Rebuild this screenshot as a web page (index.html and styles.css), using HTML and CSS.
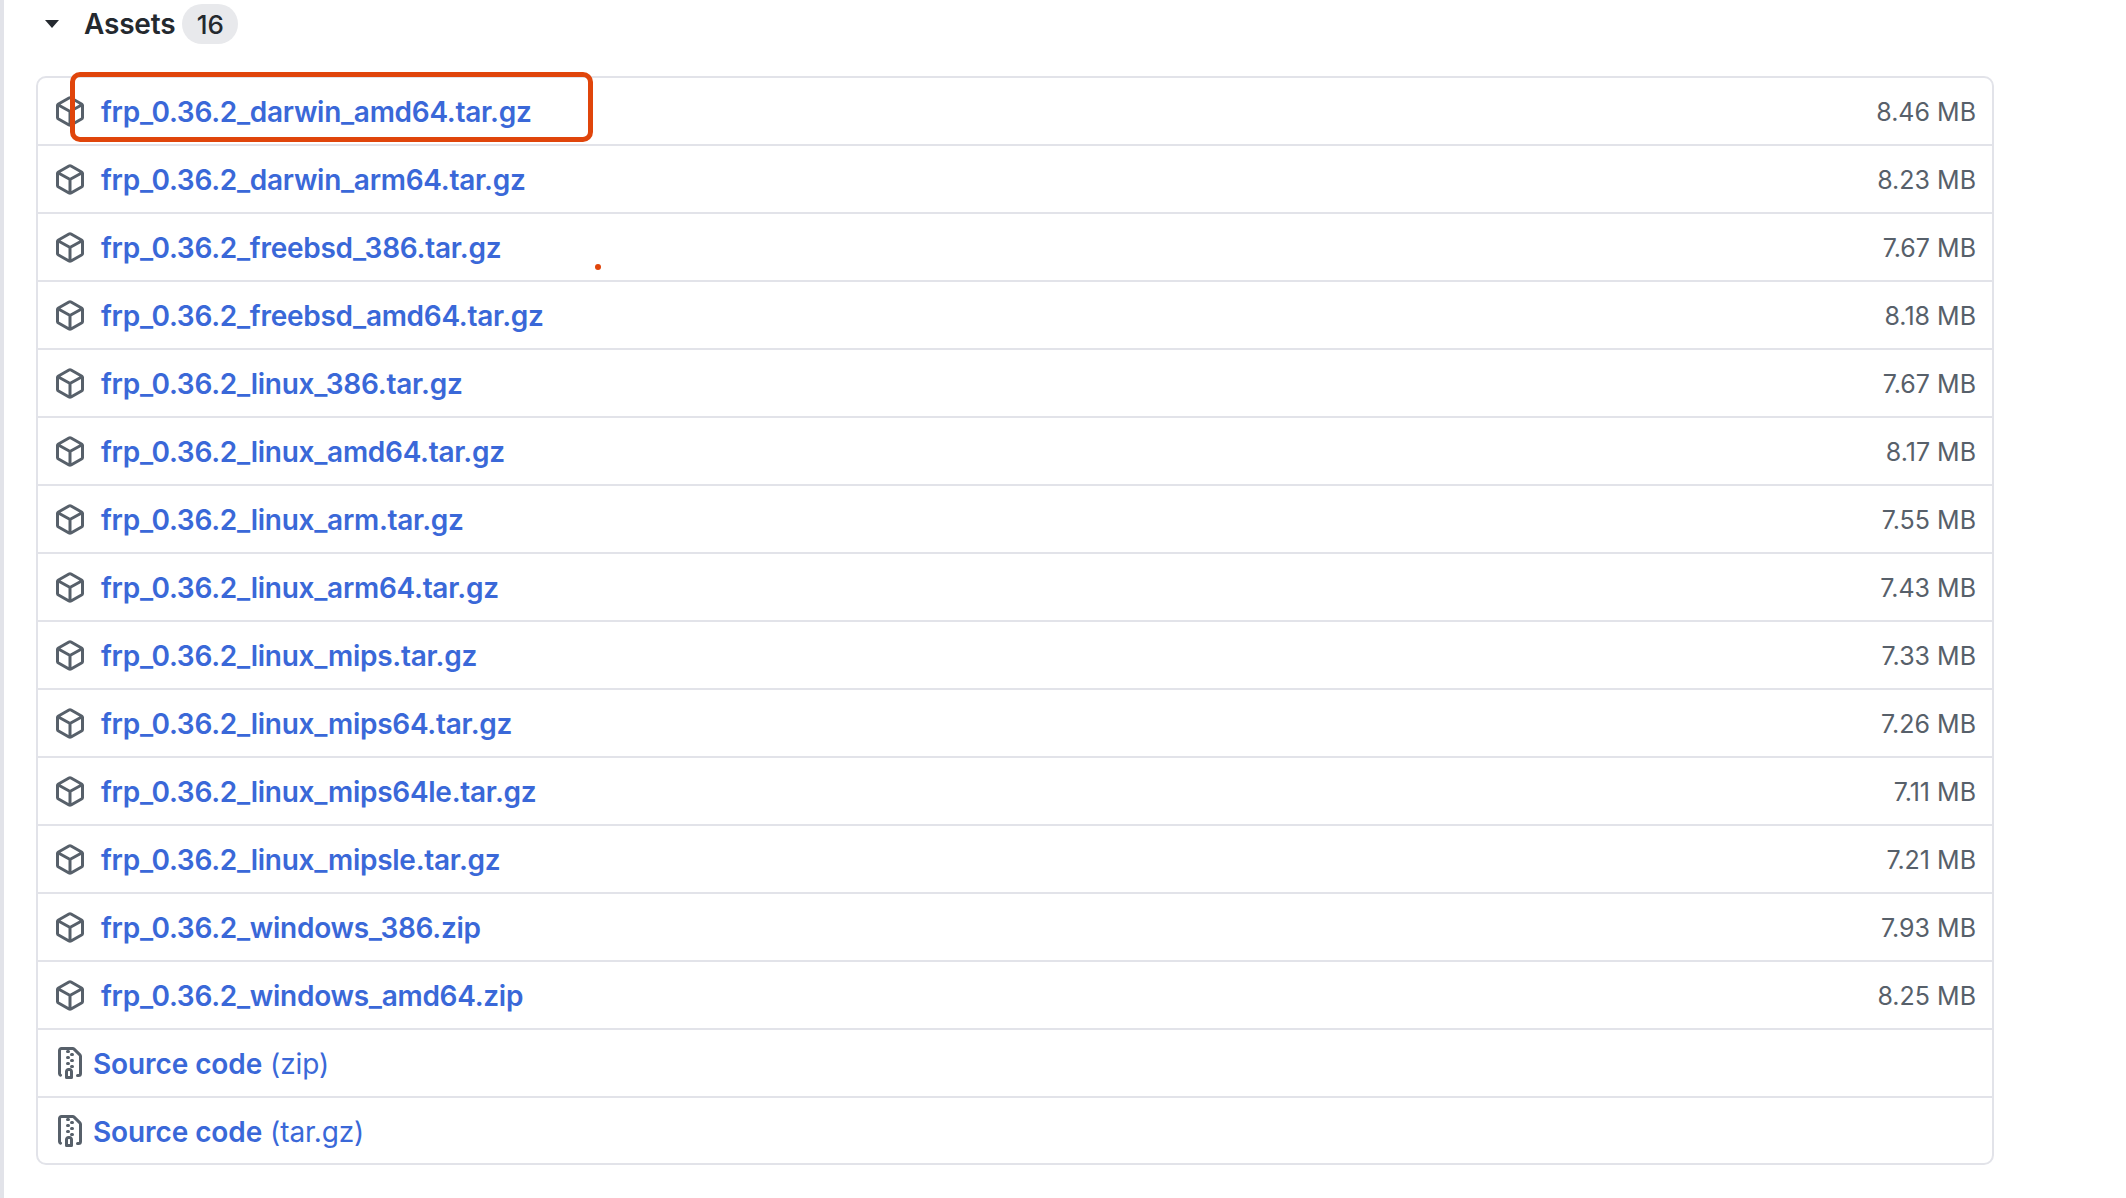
FILE: index.html
```html
<!DOCTYPE html>
<html lang="en">
<head>
<meta charset="utf-8">
<title>Assets</title>
<link rel="stylesheet" href="styles.css">
</head>
<body>
<svg class="defs" aria-hidden="true">
  <symbol id="pkg" viewBox="1 0 14 16" preserveAspectRatio="none"><path fill-rule="evenodd" d="m8.878.392 5.25 3.045c.54.314.872.89.872 1.514v6.098a1.75 1.75 0 0 1-.872 1.514l-5.25 3.045a1.75 1.75 0 0 1-1.756 0l-5.25-3.045A1.75 1.75 0 0 1 1 11.049V4.951c0-.624.332-1.201.872-1.514L7.122.392a1.75 1.75 0 0 1 1.756 0ZM7.875 1.69l-4.63 2.685L8 7.133l4.755-2.758-4.63-2.685a.248.248 0 0 0-.25 0ZM2.5 5.677v5.372c0 .09.047.171.125.216l4.625 2.683V8.432Zm6.25 8.271 4.625-2.683a.25.25 0 0 0 .125-.216V5.677L8.75 8.432Z"/></symbol>
  <symbol id="zip" viewBox="2 0 12 16" preserveAspectRatio="none"><path fill-rule="evenodd" d="M3.5 1.75v11.5c0 .09.048.173.126.217a.75.75 0 0 1-.752 1.298A1.748 1.748 0 0 1 2 13.25V1.75C2 .784 2.784 0 3.75 0h5.586c.464 0 .909.185 1.237.513l2.914 2.914c.329.328.513.773.513 1.237v8.586A1.75 1.75 0 0 1 12.25 15h-.5a.75.75 0 0 1 0-1.5h.5a.25.25 0 0 0 .25-.25V4.664a.25.25 0 0 0-.073-.177L9.513 1.573a.25.25 0 0 0-.177-.073H7.25a.75.75 0 0 1 0 1.5h-.5a.75.75 0 0 1 0-1.5h-3a.25.25 0 0 0-.25.25Zm3.75 8.75h.5c.966 0 1.75.784 1.75 1.75v3a.75.75 0 0 1-.75.75h-2.5a.75.75 0 0 1-.75-.75v-3c0-.966.784-1.75 1.75-1.75ZM6 5.25a.75.75 0 0 1 .75-.75h.5a.75.75 0 0 1 0 1.5h-.5A.75.75 0 0 1 6 5.25Zm.75 2.25h.5a.75.75 0 0 1 0 1.5h-.5a.75.75 0 0 1 0-1.5ZM8 6.75A.75.75 0 0 1 8.75 6h.5a.75.75 0 0 1 0 1.5h-.5A.75.75 0 0 1 8 6.75ZM8.75 3h.5a.75.75 0 0 1 0 1.5h-.5a.75.75 0 0 1 0-1.5ZM8 9.75A.75.75 0 0 1 8.75 9h.5a.75.75 0 0 1 0 1.5h-.5A.75.75 0 0 1 8 9.75Zm-1 2.5v2.25h1v-2.25a.25.25 0 0 0-.25-.25h-.5a.25.25 0 0 0-.25.25Z"/></symbol>
</svg>
<main class="page">
  <header class="summary">
    <svg class="caret" viewBox="0 0 14 8"><path d="M0 0h14L7 8Z"/></svg>
    <h3 class="title">Assets</h3>
    <span class="badge">16</span>
  </header>
  <ul class="assets">
    <li class="row"><svg class="icon"><use href="#pkg"/></svg><a class="name">frp_0.36.2_darwin_amd64.tar.gz</a><span class="size">8.46 MB</span></li>
    <li class="row"><svg class="icon"><use href="#pkg"/></svg><a class="name">frp_0.36.2_darwin_arm64.tar.gz</a><span class="size">8.23 MB</span></li>
    <li class="row"><svg class="icon"><use href="#pkg"/></svg><a class="name">frp_0.36.2_freebsd_386.tar.gz</a><span class="size">7.67 MB</span></li>
    <li class="row"><svg class="icon"><use href="#pkg"/></svg><a class="name">frp_0.36.2_freebsd_amd64.tar.gz</a><span class="size">8.18 MB</span></li>
    <li class="row"><svg class="icon"><use href="#pkg"/></svg><a class="name">frp_0.36.2_linux_386.tar.gz</a><span class="size">7.67 MB</span></li>
    <li class="row"><svg class="icon"><use href="#pkg"/></svg><a class="name">frp_0.36.2_linux_amd64.tar.gz</a><span class="size">8.17 MB</span></li>
    <li class="row"><svg class="icon"><use href="#pkg"/></svg><a class="name">frp_0.36.2_linux_arm.tar.gz</a><span class="size">7.55 MB</span></li>
    <li class="row"><svg class="icon"><use href="#pkg"/></svg><a class="name">frp_0.36.2_linux_arm64.tar.gz</a><span class="size">7.43 MB</span></li>
    <li class="row"><svg class="icon"><use href="#pkg"/></svg><a class="name">frp_0.36.2_linux_mips.tar.gz</a><span class="size">7.33 MB</span></li>
    <li class="row"><svg class="icon"><use href="#pkg"/></svg><a class="name">frp_0.36.2_linux_mips64.tar.gz</a><span class="size">7.26 MB</span></li>
    <li class="row"><svg class="icon"><use href="#pkg"/></svg><a class="name">frp_0.36.2_linux_mips64le.tar.gz</a><span class="size">7.11 MB</span></li>
    <li class="row"><svg class="icon"><use href="#pkg"/></svg><a class="name">frp_0.36.2_linux_mipsle.tar.gz</a><span class="size">7.21 MB</span></li>
    <li class="row"><svg class="icon"><use href="#pkg"/></svg><a class="name">frp_0.36.2_windows_386.zip</a><span class="size">7.93 MB</span></li>
    <li class="row"><svg class="icon"><use href="#pkg"/></svg><a class="name">frp_0.36.2_windows_amd64.zip</a><span class="size">8.25 MB</span></li>
    <li class="row row-source"><svg class="icon"><use href="#zip"/></svg><a class="name">Source code <span class="ext">(zip)</span></a></li>
    <li class="row row-source"><svg class="icon"><use href="#zip"/></svg><a class="name">Source code <span class="ext">(tar.gz)</span></a></li>
  </ul>
</main>
<div class="mark-box"></div>
<div class="mark-dot"></div>
</body>
</html>
```
FILE: styles.css
```css
* { box-sizing: border-box; }
html, body { margin: 0; padding: 0; background: #fff; }
body {
  width: 2126px;
  height: 1198px;
  overflow: hidden;
  font-family: Inter, "Liberation Sans", sans-serif;
  border-left: 4px solid #e2e3e9;
  position: relative;
}
.defs { display: none; }
.page { padding: 0 132px 0 32px; }
.summary {
  display: flex;
  align-items: center;
  height: 48px;
  padding-left: 9px;
}
.caret { width: 14px; height: 8px; fill: #24292f; margin-right: 25px; }
.title { margin: 0; font-size: 28px; font-weight: 600; color: #24292f; letter-spacing: -0.2px; }
.badge {
  margin-left: 7px;
  width: 56px;
  height: 40px;
  border-radius: 20px;
  background: #e8e9ec;
  color: #24292f;
  font-size: 26px;
  font-weight: 500;
  display: flex;
  align-items: center;
  justify-content: center;
}
.assets {
  list-style: none;
  margin: 28px 0 0;
  padding: 0;
  border: 2px solid #e2e3e9;
  border-radius: 10px;
}
.row {
  display: flex;
  align-items: center;
  height: 68px;
  padding: 0 16px 0 18px;
  border-bottom: 2px solid #e2e3e9;
}
.row:last-child { height: 65px; border-bottom: 0; }
.icon { width: 28px; height: 31px; fill: #57606a; flex: none; margin-right: 17px; }
.row-source .icon { width: 24px; height: 32px; margin: 0 11px 0 2px; }
.name { font-size: 28px; font-weight: 600; color: #3a68d8; letter-spacing: -0.28px; margin-top: 2px; }
.row-source .name { letter-spacing: -0.1px; }
.ext { font-weight: 400; margin-left: 1px; }
.size { margin-left: auto; font-size: 25px; color: #57606a; margin-top: 1px; }
.mark-box {
  position: absolute;
  left: 66px;
  top: 72px;
  width: 523px;
  height: 70px;
  border: 5px solid #e0450b;
  border-radius: 10px;
}
.mark-dot {
  position: absolute;
  left: 591px;
  top: 264px;
  width: 6px;
  height: 6px;
  border-radius: 50%;
  background: #e0450b;
}
```
